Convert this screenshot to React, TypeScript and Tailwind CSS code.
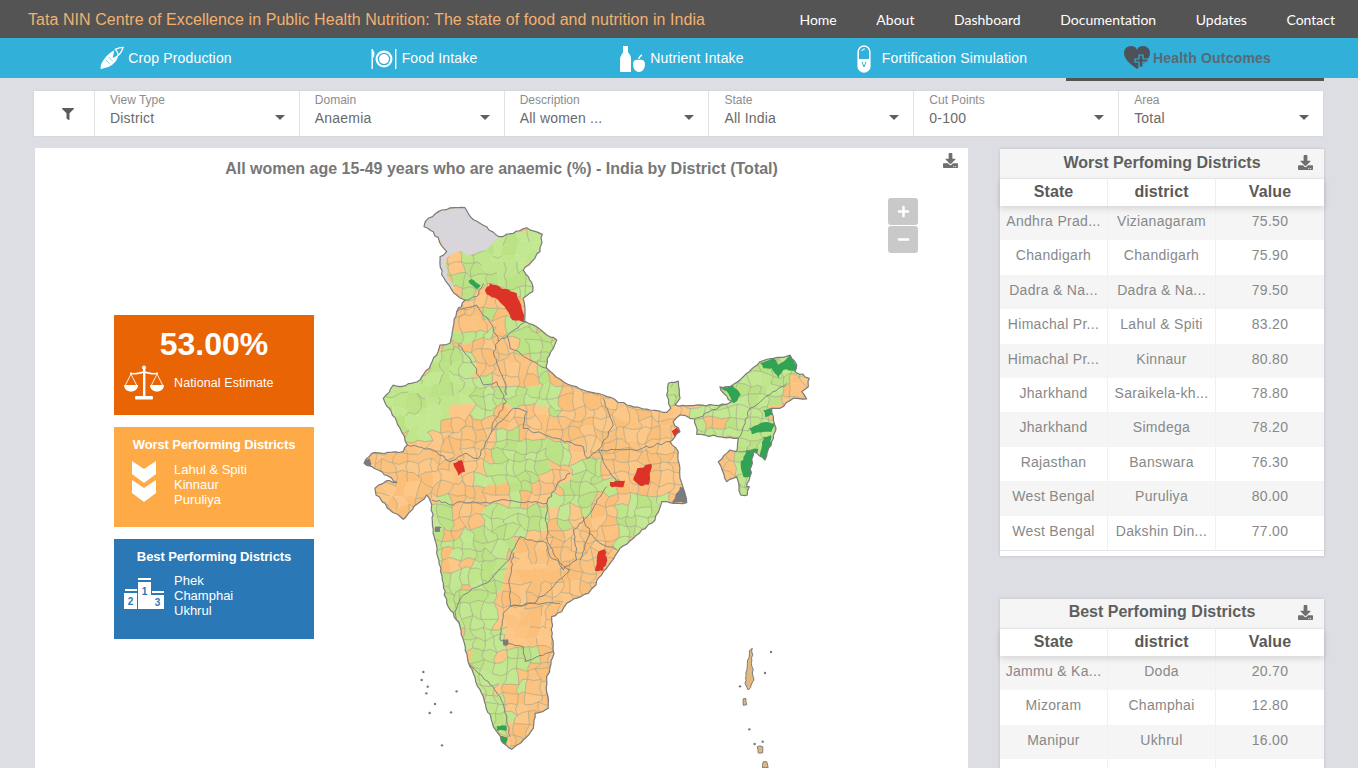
import { FaDownload, FaFilter, FaPlus, FaMinus } from "react-icons/fa";

type P = [number, number];
const z4 = (a: number[][]): P[] => a.map(([x, y]) => [x / 3 + 350, y / 3 + 195]);
const z5 = (a: number[][]): P[] => a.map(([x, y]) => [x / 3 + 350, y / 3 + 480]);
const str = (a: P[]) => a.map(([x, y]) => `${x.toFixed(1)},${y.toFixed(1)}`).join(" ");

function rng(seed: number) {
  return () => {
    seed |= 0;
    seed = (seed + 0x6d2b79f5) | 0;
    let t = Math.imul(seed ^ (seed >>> 15), 1 | seed);
    t = (t + Math.imul(t ^ (t >>> 7), 61 | t)) ^ t;
    return ((t ^ (t >>> 14)) >>> 0) / 4294967296;
  };
}
const W = rng(7);
function wig(poly: P[], closed: boolean, seg = 4, amp = 1.5): P[] {
  const out: P[] = [];
  const n = closed ? poly.length : poly.length - 1;
  for (let i = 0; i < n; i++) {
    const a = poly[i];
    const b = poly[(i + 1) % poly.length];
    const d = Math.hypot(b[0] - a[0], b[1] - a[1]);
    const k = Math.max(1, Math.round(d / seg));
    out.push(a);
    for (let s = 1; s < k; s++) {
      const t = s / k;
      out.push([a[0] + (b[0] - a[0]) * t + (W() - 0.5) * 2 * amp, a[1] + (b[1] - a[1]) * t + (W() - 0.5) * 2 * amp]);
    }
  }
  if (!closed) out.push(poly[poly.length - 1]);
  return out;
}

const outlineBase: P[] = [
  ...z4([[222,95],[235,70],[275,45],[315,38],[345,38],[372,75],[410,95],[447,125],[490,115],[530,98],[577,118],[570,170],[520,225],[545,262],[548,290],[520,310],[525,350],[524,378],[560,395],[590,420],[620,435],[592,490],[590,520],[640,560],[700,585],[760,600],[830,630],[900,645],[950,652],[962,640],[950,600],[955,565],[985,558],[990,610],[975,630],[1030,632],[1130,628],[1145,620],[1112,585],[1110,575],[1140,575],[1180,545],[1230,500],[1270,490],[1320,480],[1340,510],[1335,530],[1378,550],[1375,575],[1355,590],[1370,612],[1330,610],[1290,640],[1265,640],[1278,700],[1265,740],[1245,795],[1210,770],[1200,845],[1190,875]]),
  ...z5([[1198,20],[1192,45],[1172,45],[1165,5]]),
  ...z4([[1160,845],[1130,860],[1105,800],[1140,765],[1160,770],[1165,730],[1040,718],[1034,672],[990,660],[970,680],[990,710],[960,740],[985,770],[990,850],[1000,880]]),
  ...z5([[1005,40],[1010,68],[970,70],[935,65],[915,120],[850,175],[810,205],[770,265],[715,340],[650,370],[635,395],[605,410],[605,470],[612,520],[590,600],[595,685],[555,700],[550,745],[520,780],[485,808],[460,790],[430,740],[400,650],[360,560],[330,440],[290,370],[255,180],[250,150],[245,75],[230,45],[160,118],[120,90],[78,45],[75,25],[110,2]]),
  ...z4([[140,862],[85,825],[42,805],[65,775],[160,770],[172,750],[140,680],[100,610],[130,570],[150,575],[210,555],[260,480],[270,450],[300,445],[320,350],[345,315],[320,300],[300,275],[275,240],[270,185],[290,170],[250,110]]),
];
const outline = wig(outlineBase, true, 4, 1);

const greens: P[][] = [
  z4([[285,190],[360,180],[440,100],[590,80],[590,170],[530,225],[560,290],[505,322],[440,270],[400,265],[355,312],[310,290],[285,240]]),
  z4([[470,390],[530,365],[640,430],[600,525],[520,480],[470,420]]),
  z4([[315,415],[420,395],[432,420],[380,445],[325,445]]),
  z4([[395,340],[440,330],[470,372],[420,380]]),
  z4([[85,610],[125,555],[205,540],[250,470],[265,440],[330,450],[370,500],[400,560],[440,560],[470,590],[460,640],[410,680],[350,630],[290,680],[260,720],[170,755],[130,680]]),
  z4([[470,590],[520,560],[600,550],[640,600],[640,690],[600,660],[550,620],[470,630]]),
  z4([[360,880],[440,760],[450,700],[500,700],[530,720],[640,730],[680,760],[650,800],[600,800],[580,840],[520,885]]),
  z4([[665,800],[750,795],[790,885],[665,885]]),
  z5([[640,20],[720,0],[790,0],[760,50],[720,90],[700,150],[615,130],[610,70]]),
  z5([[795,170],[790,130],[830,50],[900,50],[950,65],[925,125],[855,185],[815,215]]),
  z5([[240,70],[290,65],[300,110],[290,180],[340,170],[400,120],[420,70],[500,60],[590,80],[590,150],[510,170],[490,230],[470,250],[480,340],[430,370],[460,410],[450,490],[520,490],[615,510],[520,540],[520,600],[525,650],[450,610],[420,620],[480,700],[470,770],[420,760],[370,570],[320,445],[270,370],[235,200]]),
  z4([[1040,625],[1150,615],[1095,565],[1230,485],[1350,470],[1390,550],[1355,590],[1260,640],[1290,700],[1250,810],[1210,885],[1160,850],[1150,760],[1165,725],[1035,725]]),
  z5([[1160,0],[1205,0],[1200,55],[1165,55]]),
  z4([[935,555],[995,545],[995,612],[950,625]]),
];
const oranges: P[][] = [
  z5([[285,200],[360,260],[290,275]]),
  z5([[320,310],[390,310],[340,335]]),
  z5([[425,365],[475,355],[450,395]]),
  z5([[365,430],[400,435],[385,470]]),
  z5([[430,500],[510,500],[450,545]]),
  z5([[585,80],[620,80],[615,190],[590,200]]),
  z5([[660,70],[710,60],[700,150],[650,130]]),
  z4([[1040,682],[1145,672],[1140,700],[1060,715]]),
  z4([[1310,570],[1390,540],[1375,615],[1285,612]]),
  z4([[1100,800],[1140,770],[1155,840],[1130,865]]),
  z4([[290,185],[325,165],[320,225],[290,215]]),
  z4([[310,215],[340,215],[330,235]]),
  z5([[490,570],[545,570],[540,620],[500,625]]),
];
const lowDensity: P[][] = [
  z4([[100,610],[130,570],[260,480],[340,500],[360,640],[280,700],[170,745]]),
  z4([[400,170],[575,100],[570,170],[540,300],[440,260]]),
  z5([[470,370],[610,400],[610,500],[470,490]]),
  z5([[480,190],[650,280],[560,340],[480,340]]),
  z5([[75,20],[240,20],[160,110]]),
];
const darkGreens: P[][] = [
  z4([[355,258],[365,252],[392,272],[382,282],[368,272]]),
  z4([[1230,505],[1270,490],[1285,510],[1320,480],[1340,510],[1335,528],[1300,525],[1285,550],[1265,520],[1240,520]]),
  z4([[1112,578],[1150,572],[1172,600],[1150,625],[1135,595]]),
  z4([[1240,645],[1268,638],[1268,660],[1245,665]]),
  z4([[1198,700],[1240,682],[1275,685],[1265,710],[1225,712],[1205,718]]),
  z4([[1240,725],[1262,720],[1265,745],[1248,795],[1228,785]]),
  z4([[1188,765],[1225,762],[1220,785],[1208,795],[1205,845],[1180,845],[1172,810]]),
  z5([[440,738],[470,738],[470,752],[440,752]]),
  z5([[448,768],[472,772],[468,798],[452,785]]),
].map((p) => wig(p, true, 3, 1));
const reds: P[][] = [
  z4([[405,285],[420,265],[465,282],[500,295],[515,340],[525,382],[488,376],[470,345],[445,315],[410,298]]),
  z4([[965,708],[980,698],[998,716],[975,728]]),
  z4([[310,805],[335,795],[345,830],[325,842]]),
  z4([[862,820],[905,808],[896,870],[870,872],[850,855]]),
  z5([[780,5],[825,2],[820,22],[785,22]]),
  z5([[855,0],[875,0],[868,14]]),
  z5([[745,215],[765,208],[772,240],[760,272],[735,272],[740,245]]),
].map((p) => wig(p, true, 3, 1));
const darks: P[][] = [
  z5([[990,20],[1005,20],[1010,68],[965,68]]),
  z4([[40,795],[60,790],[62,815],[45,815]]),
  z5([[255,140],[275,142],[270,155],[255,155]]),
  z5([[458,478],[474,478],[474,496],[460,496]]),
].map((p) => wig(p, true, 3, 1));
const stateLines: P[][] = [
  z4([[345,315],[380,305],[400,265]]),
  z4([[320,350],[380,330],[430,400],[445,440],[430,470],[450,530],[465,560],[470,600]]),
  z4([[445,440],[475,420],[530,380]]),
  z4([[325,450],[360,490],[400,570],[440,560],[470,620],[430,680],[425,710],[490,640],[530,650],[520,700],[620,730],[700,755],[710,790],[745,765],[790,690],[760,610]]),
  z4([[470,420],[480,460],[520,485],[590,520]]),
  z4([[745,765],[850,765],[960,740]]),
  z4([[172,750],[260,770],[300,800],[345,775],[385,790],[425,710]]),
  z4([[745,765],[760,800],[800,860]]),
  z5([[245,60],[310,75],[335,65],[420,70],[470,60],[500,65],[590,70],[625,5],[660,-20]]),
  z5([[590,70],[590,170],[610,220],[640,270],[680,240],[670,150],[720,100],[770,20]]),
  z5([[700,110],[720,160],[690,240]]),
  z5([[800,210],[750,190],[715,160]]),
  z5([[510,170],[590,190],[600,230],[660,270],[600,330],[550,370],[480,380],[480,290],[490,220]]),
  z5([[330,440],[315,395],[340,345],[420,300],[470,245],[510,170]]),
  z5([[460,400],[480,380],[545,370],[630,370]]),
  z5([[460,400],[450,480],[520,500],[525,545],[612,515]]),
  z5([[360,555],[430,620],[450,650],[470,720],[480,770]]),
  z4([[1035,670],[1130,628]]),
  z4([[1165,730],[1200,640],[1310,565]]),
  z4([[1210,770],[1165,770]]),
].map((p) => wig(p, false, 4, 1.3));
const islands: P[][] = [
  z5([[1198,512],[1207,505],[1206,560],[1212,600],[1195,630],[1185,610],[1192,560]]),
  z5([[1180,656],[1188,656],[1190,674],[1180,676]]),
  z5([[1222,800],[1238,800],[1238,818],[1224,818]]),
  z5([[1240,845],[1250,845],[1254,864],[1238,864]]),
].map((p) => wig(p, true, 3, 0.9));
const dots: P[] = [[220,576],[215,600],[233,620],[229,640],[320,634],[255,672],[239,699],[303,697],[276,796],[1263,516],[1245,579],[1170,619],[1198,748],[1214,792],[1238,785]].map(([x, y]) => [x / 3 + 350, y / 3 + 480]);

function inside(p: P, poly: P[]) {
  let c = false;
  for (let i = 0, j = poly.length - 1; i < poly.length; j = i++) {
    const [xi, yi] = poly[i];
    const [xj, yj] = poly[j];
    if (yi > p[1] !== yj > p[1] && p[0] < ((xj - xi) * (p[1] - yi)) / (yj - yi) + xi) c = !c;
  }
  return c;
}
const R = rng(42);
const step = 11;
const nx = 44;
const ny = 54;
const x0 = 352;
const y0 = 198;
const V: P[][] = [];
const MH: P[][] = [];
const MV: P[][] = [];
for (let i = 0; i <= nx; i++) {
  V[i] = [];
  MH[i] = [];
  MV[i] = [];
  for (let j = 0; j <= ny; j++) V[i][j] = [x0 + i * step + (R() - 0.5) * 8, y0 + j * step + (R() - 0.5) * 8];
}
for (let i = 0; i <= nx; i++)
  for (let j = 0; j <= ny; j++) {
    if (i < nx) MH[i][j] = [(V[i][j][0] + V[i + 1][j][0]) / 2 + (R() - 0.5) * 3, (V[i][j][1] + V[i + 1][j][1]) / 2 + (R() - 0.5) * 5];
    if (j < ny) MV[i][j] = [(V[i][j][0] + V[i][j + 1][0]) / 2 + (R() - 0.5) * 5, (V[i][j][1] + V[i][j + 1][1]) / 2 + (R() - 0.5) * 3];
  }
const cells: { pts: string; fill: string }[] = [];
const edges: string[] = [];
const ORG = ["#fdc787", "#fcc380", "#fbbf7a"];
const GRN = ["#bfe68b", "#bbe385", "#c3e892"];
for (let i = 0; i < nx; i++)
  for (let j = 0; j < ny; j++) {
    const c: P = [(V[i][j][0] + V[i + 1][j + 1][0]) / 2, (V[i][j][1] + V[i + 1][j + 1][1]) / 2];
    const pool = !oranges.some((o) => inside(c, o)) && greens.some((g) => inside(c, g)) ? GRN : ORG;
    const near = [-9, 0, 9].some((dx) => [-9, 0, 9].some((dy) => inside([c[0] + dx, c[1] + dy], outline)));
    const r1 = R();
    const r2 = R();
    const r3 = R();
    if (!near) continue;
    cells.push({
      pts: str([V[i][j], MH[i][j], V[i + 1][j], MV[i + 1][j], V[i + 1][j + 1], MH[i][j + 1], V[i][j + 1], MV[i][j]]),
      fill: pool[Math.floor(r1 * 3)],
    });
    const drop = lowDensity.some((o) => inside(c, o)) ? 0.72 : 0.12;
    if (r2 > drop) edges.push(str([V[i][j], MH[i][j], V[i + 1][j]]));
    if (r3 > drop) edges.push(str([V[i][j], MV[i][j], V[i][j + 1]]));
  }
const greyPoly = wig(z4([[222,95],[235,70],[275,45],[315,38],[345,38],[372,75],[410,95],[447,125],[410,165],[360,180],[325,168],[290,188],[290,240],[320,290],[345,315],[300,275],[275,240],[270,185],[290,170],[250,110]]), true, 4, 0.8);

function IndiaMap() {
  return (
    <svg width="470" height="573" viewBox="350 195 470 573" className="block shrink-0">
      <defs>
        <clipPath id="india">
          <polygon points={str(outline)} />
        </clipPath>
      </defs>
      <g clipPath="url(#india)">
        {cells.map((c, i) => (
          <polygon key={i} points={c.pts} fill={c.fill} stroke={c.fill} strokeWidth="0.4" />
        ))}
        {edges.map((e, i) => (
          <polyline key={i} points={e} fill="none" stroke="#a4a68a" strokeWidth="0.65" />
        ))}
        <polygon points={str(greyPoly)} fill="#d9d6db" />
        {darkGreens.map((p, i) => (
          <polygon key={i} points={str(p)} fill="#31a354" />
        ))}
        {reds.map((p, i) => (
          <polygon key={i} points={str(p)} fill="#dd3228" />
        ))}
        {darks.map((p, i) => (
          <polygon key={i} points={str(p)} fill="#7b7b80" />
        ))}
        {stateLines.map((p, i) => (
          <polyline key={i} points={str(p)} fill="none" stroke="#808080" strokeWidth="0.95" />
        ))}
      </g>
      <polygon points={str(outline)} fill="none" stroke="#7b7b7b" strokeWidth="1.2" strokeLinejoin="round" />
      {islands.map((p, i) => (
        <polygon key={i} points={str(p)} fill="#e0b880" stroke="#7b7b7b" strokeWidth="1" />
      ))}
      {dots.map(([x, y], i) => (
        <circle key={i} cx={x} cy={y} r="1.2" fill="#77777c" />
      ))}
    </svg>
  );
}

const CornIcon = () => (
  <svg width="25" height="26" viewBox="0 0 26 26" fill="#fff">
    <path d="M1 24c-1-3 0-6 2-9 3-5 8-9 12-11-1 3-1 6-2 8 2-1 5-2 6-4 0 5-4 10-8 12-3 2-6 2-8 3-1 0-2 1-2 1z" />
    <path d="M16 3c2-1 5-2 8-2-1 3-2 6-5 8 0-2-1-4-3-6z" fill="none" stroke="#fff" strokeWidth="1.3" />
    <path d="M6 14l4 4M9 11l4 4" stroke="#31b0d9" strokeWidth="0.7" />
  </svg>
);
const PlateIcon = () => (
  <svg width="26" height="24" viewBox="0 0 26 24" fill="#fff">
    <rect x="0.5" y="2" width="1.4" height="20" />
    <rect x="24" y="2" width="1.4" height="20" />
    <path d="M2 3c2 2 2 6 0 8z" />
    <circle cx="13" cy="12" r="8.5" />
    <circle cx="13" cy="12" r="6.3" fill="#31b0d9" />
    <circle cx="13" cy="12" r="5" />
  </svg>
);
const BottleIcon = () => (
  <svg width="26" height="26" viewBox="0 0 26 26" fill="#fff">
    <path d="M3 0h5v6c2 3 3 4 3 7v13H0V13c0-3 2-4 3-7z" />
    <path d="M19 14c3-1 6 0 6 4 0 4-2 8-6 8s-6-4-6-8c0-4 3-5 6-4z" />
    <path d="M19 13c0-2 1-3 3-4" fill="none" stroke="#fff" strokeWidth="1.4" />
  </svg>
);
const CapsuleIcon = () => (
  <svg width="14" height="28" viewBox="0 0 14 28">
    <rect x="1.2" y="1" width="11.6" height="26" rx="5.8" fill="none" stroke="#fff" strokeWidth="1.6" />
    <path d="M1.5 14h11v7a5.5 5.5 0 0 1-11 0z" fill="#fff" />
    <path d="M5 6c0-2 3-2 3-2" stroke="#fff" strokeWidth="1.2" fill="none" />
    <path d="M5 17l2 5 2-5" stroke="#31b0d9" strokeWidth="1" fill="none" />
  </svg>
);
const HeartIcon = () => (
  <svg width="26" height="24" viewBox="0 0 26 24" fill="#4d5258">
    <path d="M13 23C6 18 0 13 0 7c0-4 3-7 7-7 3 0 5 1 6 4 1-3 3-4 6-4 4 0 7 3 7 7 0 6-6 11-13 16z" />
    <path d="M15 9h4v4h5v3h-5v5h-4v-5h-4v-3h4z" fill="#4d5258" stroke="#31b0d9" strokeWidth="1.2" />
  </svg>
);
const ScaleIcon = () => (
  <svg width="40" height="36" viewBox="0 0 40 36" fill="#fff">
    <circle cx="20" cy="2.5" r="2" />
    <rect x="19" y="3" width="2.4" height="28" />
    <rect x="11" y="31" width="18" height="3.4" rx="1" />
    <path d="M6 7.5c5 1 9 0 14-1.5 5 1.5 9 2.5 14 1.5v1.6c-5 1-9 0-14-1.4-5 1.4-9 2.4-14 1.4z" />
    <path d="M7 9L1.5 20M7 9l5.5 11M33 9l-5.5 11M33 9l5.5 11" stroke="#fff" strokeWidth="0.9" fill="none" />
    <path d="M0 20h14c0 4-3 6.5-7 6.5S0 24 0 20zM26 20h14c0 4-3 6.5-7 6.5S26 24 26 20z" />
  </svg>
);
const Chevrons = () => (
  <svg width="24" height="41" viewBox="0 0 24 41" fill="#fff">
    <path d="M0 0l12 8 12-8v13L12 22 0 13z" />
    <path d="M0 19l12 8 12-8v13L12 41 0 32z" />
  </svg>
);
const Podium = () => (
  <svg width="40" height="31" viewBox="0 0 40 31" fill="#fff">
    <rect x="14" y="0" width="13" height="2" />
    <rect x="1" y="11" width="12" height="2" />
    <rect x="28" y="13" width="12" height="2" />
    <path d="M14 4h13v27H14zM0 15h13v16H0zM27 17h13v14H27z" />
    <text x="20.5" y="17" textAnchor="middle" fontSize="10" fontWeight="700" fill="#2b78b6" fontFamily="Liberation Sans">1</text>
    <text x="6.5" y="27" textAnchor="middle" fontSize="10" fontWeight="700" fill="#2b78b6" fontFamily="Liberation Sans">2</text>
    <text x="33.5" y="28" textAnchor="middle" fontSize="10" fontWeight="700" fill="#2b78b6" fontFamily="Liberation Sans">3</text>
  </svg>
);

const navLinks = ["Home", "About", "Dashboard", "Documentation", "Updates", "Contact"];
const filters = [
  ["View Type", "District"],
  ["Domain", "Anaemia"],
  ["Description", "All women ..."],
  ["State", "All India"],
  ["Cut Points", "0-100"],
  ["Area", "Total"],
];
const worst = [
  ["Andhra Prad...", "Vizianagaram", "75.50"],
  ["Chandigarh", "Chandigarh", "75.90"],
  ["Dadra & Na...", "Dadra & Na...", "79.50"],
  ["Himachal Pr...", "Lahul & Spiti", "83.20"],
  ["Himachal Pr...", "Kinnaur", "80.80"],
  ["Jharkhand", "Saraikela-kh...", "78.80"],
  ["Jharkhand", "Simdega", "78.20"],
  ["Rajasthan", "Banswara", "76.30"],
  ["West Bengal", "Puruliya", "80.00"],
  ["West Bengal", "Dakshin Din...", "77.00"],
];
const best = [
  ["Jammu & Ka...", "Doda", "20.70"],
  ["Mizoram", "Champhai", "12.80"],
  ["Manipur", "Ukhrul", "16.00"],
  ["", "", ""],
];

function Panel({ title, rows, footer }: { title: string; rows: string[][]; footer?: boolean }) {
  return (
    <div className="w-[324px] bg-white shadow-[0_0_3px_rgba(0,0,0,0.14)]">
      <div className="relative flex h-[29px] items-center justify-center bg-[#f5f5f5] pb-[2px] text-[16px] font-bold text-[#5f5f5f]">
        {title}
        <FaDownload className="absolute right-[11px] top-[6px] text-[15px] text-[#6f6f6f]" />
      </div>
      <div className="relative z-10 grid h-[28px] grid-cols-[108px_108px_108px] border-t border-[#e6e6e6] bg-white text-center text-[16px] font-bold leading-[26px] tracking-[0.1px] text-[#5a5a5a] shadow-[0_3px_6px_rgba(0,0,0,0.12)]">
        <div className="border-r border-[#eeeeee]">State</div>
        <div className="border-r border-[#eeeeee]">district</div>
        <div>Value</div>
      </div>
      {rows.map((r, i) => (
        <div
          key={i}
          className={`grid h-[34.4px] grid-cols-[108px_108px_108px] text-center text-[14px] leading-[30px] tracking-[0.3px] text-[#888888] ${i % 2 === 0 ? "bg-[#f5f5f5]" : "bg-white"}`}
        >
          <div className="border-r border-[#f1f1f1]">{r[0]}</div>
          <div className="border-r border-[#f1f1f1]">{r[1]}</div>
          <div>{r[2]}</div>
        </div>
      ))}
      {footer && <div className="h-[6px] border-t border-[#e3e5ea] bg-white" />}
    </div>
  );
}

export default function App() {
  return (
    <div className="h-[768px] w-[1358px] overflow-hidden bg-[#dcdee3] font-['Liberation_Sans',Arial,sans-serif]">
      <header className="flex h-[38px] items-center justify-between bg-[#545454] pl-[28px] pr-[23px]">
        <div className="pt-[1px] text-[16px] tracking-[0.06px] text-[#f2b170]">Tata NIN Centre of Excellence in Public Health Nutrition: The state of food and nutrition in India</div>
        <nav className="flex gap-[39.6px] font-['Lato',sans-serif] text-[14px] text-white">
          {navLinks.map((n) => (
            <span key={n}>{n}</span>
          ))}
        </nav>
      </header>
      <div className="grid h-[40px] grid-cols-[repeat(5,258px)] bg-[#31b0d9] pl-[34px] text-[14px] tracking-[0.16px] text-white">
        <div className="flex items-center justify-center gap-[3px] pb-[2px] pl-[6px]"><CornIcon />Crop Production</div>
        <div className="flex items-center justify-center gap-[5px] pb-[2px] pl-[6px]"><PlateIcon />Food Intake</div>
        <div className="flex items-center justify-center gap-[4px] pb-[2px] pl-[6px]"><BottleIcon />Nutrient Intake</div>
        <div className="flex items-center justify-center gap-[11px] pb-[2px] pl-[10px]"><CapsuleIcon />Fortification Simulation</div>
        <div className="flex h-[43px] items-center justify-center gap-[3px] border-b-[3px] border-[#545454] pl-[5px] font-bold tracking-[0.2px] text-[#586a74]"><HeartIcon />Health Outcomes</div>
      </div>
      <div className="ml-[34px] mt-[13px] flex h-[45px] w-[1289px] bg-white shadow-[0_0_2px_rgba(0,0,0,0.08)]">
        <div className="flex w-[60px] items-center justify-center pl-[8px] text-[12px] text-[#5c5c5c]"><FaFilter /></div>
        {filters.map(([l, v]) => (
          <div key={l} className="relative flex-1 border-l border-[#e2e2e2] pl-[15px] pt-[2px]">
            <div className="text-[12px] leading-[14px] text-[#8c8c8c]">{l}</div>
            <div className="mt-[2px] text-[14px] leading-[18px] tracking-[0.2px] text-[#6a6a6a]">{v}</div>
            <span className="absolute right-[14px] top-[24px] h-0 w-0 border-x-[5px] border-t-[5px] border-x-transparent border-t-[#5f5f5f]" />
          </div>
        ))}
      </div>
      <main className="mt-[12px] flex items-start pl-[35px]">
        <section className="relative h-[640px] w-[933px] shrink-0 bg-white">
          <h1 className="h-[47px] pt-[9px] text-center text-[16px] font-bold text-[#777777]">All women age 15-49 years who are anaemic (%) - India by District (Total)</h1>
          <FaDownload className="absolute right-[10px] top-[5px] text-[15px] text-[#6f6f6f]" />
          <div className="absolute left-[853px] top-[50px] z-10 flex flex-col gap-[1px]">
            <div className="flex h-[27px] w-[30px] items-center justify-center rounded-[3px] bg-[#c9c9c9] text-[13px] text-white"><FaPlus /></div>
            <div className="flex h-[27px] w-[30px] items-center justify-center rounded-[3px] bg-[#c9c9c9] text-[13px] text-white"><FaMinus /></div>
          </div>
          <div className="flex items-start pl-[79px]">
            <div className="mt-[120px] flex w-[200px] shrink-0 flex-col gap-[12px] text-white">
              <div className="h-[100px] bg-[#e96405] pt-[11px]">
                <div className="text-center text-[32px] font-bold leading-[36px]">53.00%</div>
                <div className="mt-[3px] flex items-center pl-[10px]">
                  <ScaleIcon />
                  <span className="ml-[10px] text-[12.5px] font-medium tracking-[0.1px]">National Estimate</span>
                </div>
              </div>
              <div className="h-[100px] bg-[#fdaa47] pt-[10px]">
                <div className="text-center text-[13px] font-bold leading-[16px] tracking-[-0.1px]">Worst Performing Districts</div>
                <div className="mt-[2px] flex items-start pl-[18px]">
                  <div className="mt-[6px]"><Chevrons /></div>
                  <div className="ml-[18px] mt-[7px] text-[13px] leading-[15px]">Lahul &amp; Spiti<br />Kinnaur<br />Puruliya</div>
                </div>
              </div>
              <div className="h-[100px] bg-[#2b78b6] pt-[10px]">
                <div className="text-center text-[13px] font-bold leading-[16px] tracking-[-0.1px]">Best Performing Districts</div>
                <div className="mt-[2px] flex items-start pl-[10px]">
                  <div className="mt-[11px]"><Podium /></div>
                  <div className="ml-[10px] mt-[6px] text-[13px] leading-[15px]">Phek<br />Champhai<br />Ukhrul</div>
                </div>
              </div>
            </div>
            <div className="ml-[36px]"><IndiaMap /></div>
          </div>
        </section>
        <aside className="ml-[32px] flex shrink-0 flex-col gap-[43px] pt-[1px]">
          <Panel title="Worst Perfoming Districts" rows={worst} footer />
          <Panel title="Best Perfoming Districts" rows={best} />
        </aside>
      </main>
    </div>
  );
}
